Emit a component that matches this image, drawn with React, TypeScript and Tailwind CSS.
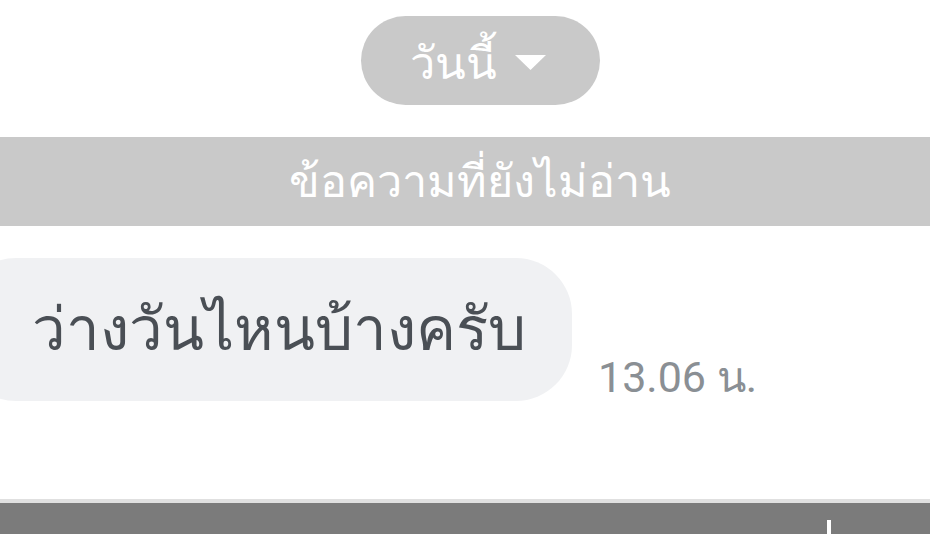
export default function App() {
  return (
    <div className="w-[930px] h-[534px] bg-white overflow-hidden flex flex-col font-['Roboto','Noto_Sans',sans-serif]">
      {/* Date pill */}
      <div className="flex justify-center pt-4 pl-[31px]">
        <div className="h-[89px] w-[239px] rounded-full bg-[#c9c9c9] flex items-center justify-center gap-[18px] pr-[6px] text-white">
          <span className="text-[45px] leading-none pt-[6px]">วันนี้</span>
          <svg width="31" height="16" viewBox="0 0 31 16" className="mt-1">
            <path d="M0 0 H31 L15.5 15 Z" fill="white" />
          </svg>
        </div>
      </div>

      {/* Unread divider */}
      <div className="mt-8 h-[89px] bg-[#c9c9c9] flex items-center justify-center pl-[29px]">
        <span className="text-white text-[45px] leading-none">ข้อความที่ยังไม่อ่าน</span>
      </div>

      {/* Message */}
      <div className="mt-8 flex items-end gap-[26px]">
        <div className="-ml-10 h-[143px] w-[612px] rounded-[56px] bg-[#f0f1f3] flex items-center pl-[72px]">
          <span className="text-[60px] leading-none text-[#4a4f55]">ว่างวันไหนบ้างครับ</span>
        </div>
        <span className="mb-[2px] text-[43px] leading-none text-[#8a8f94]">13.06 น.</span>
      </div>

      {/* Input bar */}
      <div className="mt-auto">
        <div className="h-[4px] bg-[#e0e0e0]" />
        <div className="h-[31px] bg-[#7b7b7b] flex items-end pl-[827px]">
          <div className="w-[4px] h-[14px] bg-white" />
        </div>
      </div>
    </div>
  );
}
